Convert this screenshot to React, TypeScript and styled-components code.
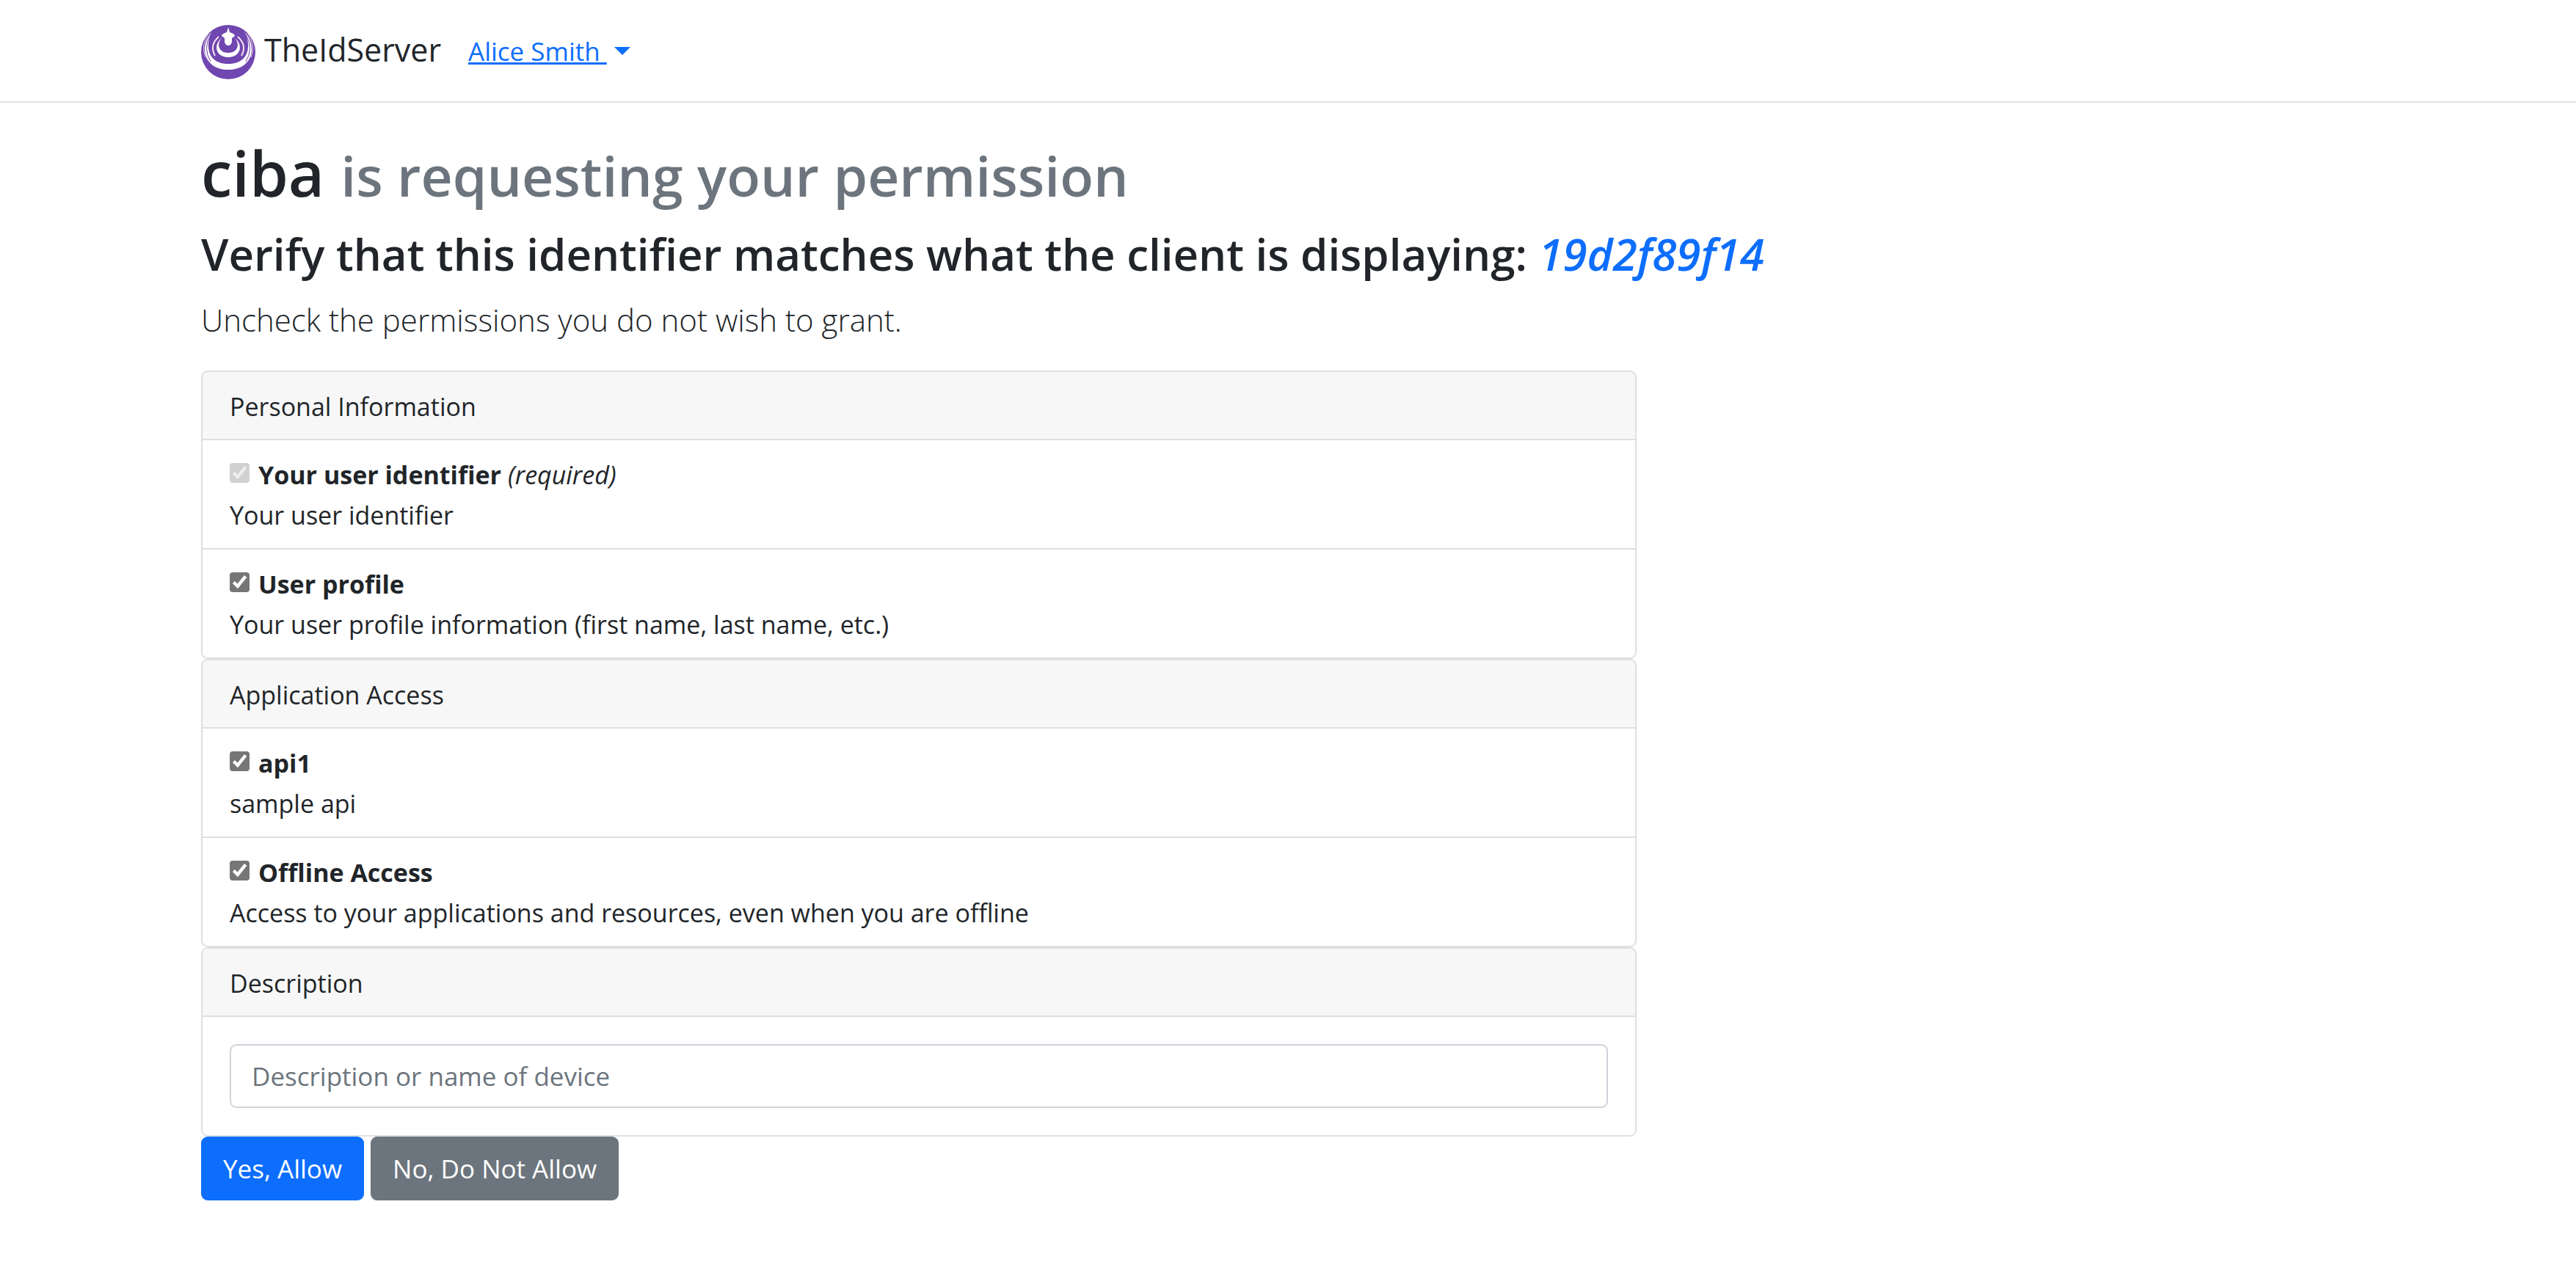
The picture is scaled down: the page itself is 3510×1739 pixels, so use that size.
import React from "react";
import styled, { createGlobalStyle } from "styled-components";

const GlobalStyle = createGlobalStyle`
  *, *::before, *::after { box-sizing: border-box; }
  body {
    margin: 0;
    background: #fff;
    color: #212529;
    font-family: "Segoe UI", "Open Sans", "Noto Sans", sans-serif;
    font-size: 34px;
    line-height: 55px;
  }
`;

const Container = styled.div`
  width: 100%;
  max-width: 3036px;
  margin: 0 auto;
  padding: 0 37px;
`;

const Header = styled.header`
  border-bottom: 2px solid #dee2e6;
`;

const Nav = styled(Container).attrs({ as: "nav" })`
  display: flex;
  align-items: center;
  min-height: 138px;
  padding-top: 4px;
`;

const Brand = styled.a`
  display: flex;
  align-items: center;
  gap: 12px;
  margin-right: 37px;
  color: #212529;
  font-size: 43px;
  line-height: 69px;
  text-decoration: none;
`;

const BrandName = styled.span`
  padding-bottom: 8px;
`;

const LogoMark = styled.svg`
  display: block;
  width: 74px;
  height: 74px;
`;

const UserMenu = styled.a`
  display: flex;
  align-items: center;
  gap: 10px;
  padding-bottom: 4px;
  color: #0d6efd;
  font-size: 35px;
  text-decoration: none;
`;

const UserName = styled.span`
  white-space: pre;
  text-decoration: underline;
  text-decoration-thickness: 3px;
`;

const Caret = styled.span`
  border-top: 11px solid;
  border-left: 11px solid transparent;
  border-right: 11px solid transparent;
`;

const Main = styled(Container).attrs({ as: "main" })`
  padding-top: 42px;
`;

const Title = styled.h1`
  margin: 0 0 16px;
  font-size: 85px;
  font-weight: 600;
  line-height: 106px;
`;

const TitleNote = styled.small`
  color: #6c757d;
  font-size: 75px;
`;

const Subtitle = styled.h3`
  margin: 0 0 16px;
  font-size: 60px;
  font-weight: 600;
  line-height: 77px;
`;

const Code = styled.em`
  color: #0d6efd;
`;

const Lead = styled.p`
  margin: 0 0 35px;
  font-size: 42px;
  font-weight: 300;
  line-height: 69px;
`;

const Columns = styled.form`
  display: grid;
  grid-template-columns: repeat(12, 1fr);
  column-gap: 55px;
`;

const Column = styled.div`
  grid-column: span 8;
`;

const Card = styled.section`
  overflow: hidden;
  border: 2px solid #dfdfdf;
  border-radius: 9px;
`;

const CardHeader = styled.h2`
  margin: 0;
  padding: 20px 37px 16px;
  border-bottom: 2px solid #dfdfdf;
  background: #f7f7f7;
  font-size: inherit;
  font-weight: 400;
`;

const ScopeList = styled.ul`
  margin: 0;
  padding: 0;
  list-style: none;
`;

const ScopeItem = styled.li`
  padding: 20px 37px 17px;

  & + & {
    border-top: 2px solid #dfdfdf;
  }
`;

const ScopeHead = styled.div`
  display: flex;
  align-items: center;
`;

const ScopeLabel = styled.label`
  display: flex;
  align-items: center;
  gap: 12px;
`;

const Checkbox = styled.input`
  width: 27px;
  height: 27px;
  margin: 0 0 6px;
  accent-color: #767676;
  clip-path: inset(0 round 4px);
`;

const Required = styled.em`
  margin-left: 9px;
`;

const CardBody = styled.div`
  padding: 37px;
`;

const TextField = styled.input`
  display: block;
  width: 100%;
  padding: 14px 28px;
  border: 2px solid #ced4da;
  border-radius: 9px;
  background: #fff;
  color: #212529;
  font: inherit;
  font-size: 35px;

  &::placeholder {
    color: #6c757d;
    opacity: 1;
  }
`;

const Actions = styled.div`
  display: flex;
  gap: 9px;
`;

const Button = styled.button<{ $tone: string }>`
  padding: 14px 28px;
  border: 2px solid ${(p) => p.$tone};
  border-radius: 9px;
  background: ${(p) => p.$tone};
  color: #fff;
  font: inherit;
  font-size: 35px;
`;

type Scope = { id: string; name: string; detail: string; required?: boolean };

const groups: { title: string; scopes: Scope[] }[] = [
  {
    title: "Personal Information",
    scopes: [
      { id: "openid", name: "Your user identifier", detail: "Your user identifier", required: true },
      { id: "profile", name: "User profile", detail: "Your user profile information (first name, last name, etc.)" },
    ],
  },
  {
    title: "Application Access",
    scopes: [
      { id: "api1", name: "api1", detail: "sample api" },
      { id: "offline", name: "Offline Access", detail: "Access to your applications and resources, even when you are offline" },
    ],
  },
];

function Logo() {
  return (
    <LogoMark viewBox="0 0 74 74" aria-hidden="true">
      <circle cx="37" cy="37" r="37" fill="#7046b0" />
      {/* outer crescent and the fine lines inside its arms */}
      <path
        d="M14 10C-4 32 6 61 37 61S78 32 60 10C69 30 64 53 37 53S5 30 14 10Z"
        fill="#fff"
      />
      <path d="M13 13Q2 32 13 50M61 13Q72 32 61 50" fill="none" stroke="#7046b0" strokeWidth="1" />
      <path d="M11 10Q-1 28 6 44M63 10Q75 28 68 44" fill="none" stroke="#f3d3dc" strokeWidth="1" />
      {/* faint middle arcs */}
      <path d="M24 16Q11 28 19 42M50 16Q63 28 55 42" fill="none" stroke="#f6e6ee" strokeWidth="2" />
      {/* inner ring, open at the top */}
      <path
        d="M28 18C16 27 20 44 37 44S58 27 46 18C54 27 49 38 37 38S20 27 28 18Z"
        fill="#fff"
      />
      {/* central drop with its spike */}
      <path d="M37 3L39 10C43 11 46 13 46 15L42 18V23Q41 28 37 28T32 23V18L28 15C28 13 31 11 35 10Z" fill="#fff" />
    </LogoMark>
  );
}

function ScopeRow({ scope }: { scope: Scope }) {
  return (
    <ScopeItem>
      <ScopeHead>
        <ScopeLabel htmlFor={scope.id}>
          <Checkbox type="checkbox" id={scope.id} defaultChecked disabled={scope.required} />
          <strong>{scope.name}</strong>
        </ScopeLabel>
        {scope.required && <Required>(required)</Required>}
      </ScopeHead>
      <div>{scope.detail}</div>
    </ScopeItem>
  );
}

export default function App() {
  return (
    <>
      <GlobalStyle />
      <Header>
        <Nav>
          <Brand href="#">
            <Logo />
            <BrandName>TheIdServer</BrandName>
          </Brand>
          <UserMenu href="#">
            <UserName>{"Alice Smith "}</UserName>
            <Caret />
          </UserMenu>
        </Nav>
      </Header>
      <Main>
        <Title>
          ciba <TitleNote>is requesting your permission</TitleNote>
        </Title>
        <Subtitle>
          Verify that this identifier matches what the client is displaying: <Code>19d2f89f14</Code>
        </Subtitle>
        <Lead>Uncheck the permissions you do not wish to grant.</Lead>
        <Columns onSubmit={(e) => e.preventDefault()}>
          <Column>
            {groups.map((group) => (
              <Card key={group.title}>
                <CardHeader>{group.title}</CardHeader>
                <ScopeList>
                  {group.scopes.map((scope) => (
                    <ScopeRow key={scope.id} scope={scope} />
                  ))}
                </ScopeList>
              </Card>
            ))}
            <Card>
              <CardHeader id="description-title">Description</CardHeader>
              <CardBody>
                <TextField
                  type="text"
                  aria-labelledby="description-title"
                  placeholder="Description or name of device"
                />
              </CardBody>
            </Card>
            <Actions>
              <Button type="submit" $tone="#0d6efd">Yes, Allow</Button>
              <Button type="button" $tone="#6c757d">No, Do Not Allow</Button>
            </Actions>
          </Column>
        </Columns>
      </Main>
    </>
  );
}
